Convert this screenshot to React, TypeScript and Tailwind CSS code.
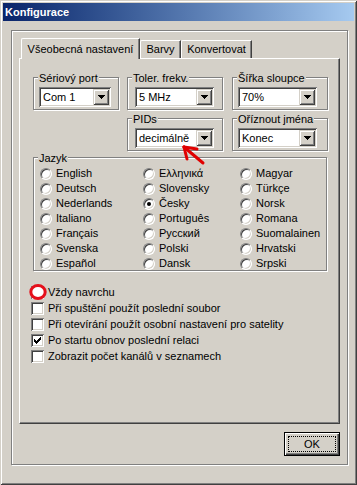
import React from 'react';

const etched = 'border border-[#808080] shadow-[inset_1px_1px_0_#fff,1px_1px_0_#fff]';
const raised =
  'shadow-[inset_1px_1px_0_#d4d0c8,inset_-1px_-1px_0_#404040,inset_2px_2px_0_#fff,inset_-2px_-2px_0_#808080]';
const sunken =
  'shadow-[inset_1px_1px_0_#808080,inset_-1px_-1px_0_#fff,inset_2px_2px_0_#404040,inset_-2px_-2px_0_#d4d0c8]';

function Group({ label, className, children }: { label: string; className: string; children?: React.ReactNode }) {
  return (
    <div className={`relative ${etched} ${className}`}>
      <span className="absolute left-[4px] top-[-6px] bg-[#d4d0c8] px-px leading-[13px]">{label}</span>
      {children}
    </div>
  );
}

function Combo({ value, className }: { value: string; className: string }) {
  return (
    <div className={`flex h-[20px] items-center bg-white p-[2px] ${sunken} ${className}`}>
      <span className="flex-1 pl-[2px] leading-[16px]">{value}</span>
      <span className={`flex h-[16px] w-[16px] items-center justify-center bg-[#d4d0c8] ${raised}`}>
        <svg width="7" height="4" viewBox="0 0 7 4" shapeRendering="crispEdges">
          <rect x="0" y="0" width="7" height="1" fill="#000" />
          <rect x="1" y="1" width="5" height="1" fill="#000" />
          <rect x="2" y="2" width="3" height="1" fill="#000" />
          <rect x="3" y="3" width="1" height="1" fill="#000" />
        </svg>
      </span>
    </div>
  );
}

function Radio({ label, checked }: { label: string; checked?: boolean }) {
  return (
    <div className="flex h-[15px] items-center gap-[4px]">
      <span className="flex h-[12px] w-[12px] items-center justify-center rounded-full border border-b-white border-l-[#808080] border-r-white border-t-[#808080] bg-white shadow-[inset_1px_1px_0_#404040,inset_-1px_-1px_0_#d4d0c8]">
        {checked && <span className="h-[4px] w-[4px] rounded-full bg-black" />}
      </span>
      <span>{label}</span>
    </div>
  );
}

function Check({ label, checked, marked }: { label: string; checked?: boolean; marked?: boolean }) {
  return (
    <div className="flex h-[16px] items-center gap-[4px]">
      <span className={`relative flex h-[13px] w-[13px] items-center justify-center bg-white ${sunken}`}>
        {checked && (
          <svg width="7" height="7" viewBox="0 0 7 7" shapeRendering="crispEdges">
            <path d="M6 0h1v1H6zM5 1h2v1H5zM0 2h1v1H0zM4 2h3v1H4zM0 3h2v1H0zM3 3h3v1H3zM0 4h5v1H0zM1 5h3v1H1zM2 6h1v1H2z" fill="#000" />
          </svg>
        )}
        {marked && (
          <svg
            className="absolute left-1/2 top-1/2 -translate-x-1/2 -translate-y-1/2"
            width="18"
            height="16"
            viewBox="0 0 18 16"
          >
            <ellipse cx="9" cy="8" rx="7.2" ry="6.4" fill="#fff" stroke="#e5101b" strokeWidth="3" />
          </svg>
        )}
      </span>
      <span>{label}</span>
    </div>
  );
}

const col1 = ['English', 'Deutsch', 'Nederlands', 'Italiano', 'Français', 'Svenska', 'Español'];
const col2 = ['Ελληνικά', 'Slovensky', 'Česky', 'Português', 'Русский', 'Polski', 'Dansk'];
const col3 = ['Magyar', 'Türkçe', 'Norsk', 'Romana', 'Suomalainen', 'Hrvatski', 'Srpski'];

export default function App() {
  return (
    <div className="relative flex h-[485px] w-[357px] flex-col bg-[#d4d0c8] p-[3px] font-['Liberation_Sans',Arial,sans-serif] text-[11px] leading-[13px] text-black shadow-[inset_1px_1px_0_#d4d0c8,inset_-1px_-1px_0_#404040,inset_2px_2px_0_#fff,inset_-2px_-2px_0_#808080]">
      <div className="flex h-[18px] items-center bg-linear-to-r from-[#0a246a] to-[#a6caf0] pl-[2px] font-bold text-white">
        Konfigurace
      </div>

      <div className={`ml-[8px] mt-[9px] flex h-[435px] w-[337px] flex-col px-[7px] pt-[7px] ${etched}`}>
        <div className="flex h-[20px] items-end pl-[2px]">
          <div className="relative z-10 -mb-px flex h-[21px] w-[119px] items-center justify-center rounded-tl-[2px] border-l border-r border-t border-l-white border-r-[#404040] border-t-white bg-[#d4d0c8] shadow-[inset_-1px_0_0_#808080]">
            Všeobecná nastavení
          </div>
          <div className="flex h-[18px] w-[41px] items-center justify-center rounded-tl-[2px] border-l border-r border-t border-l-white border-r-[#404040] border-t-white shadow-[inset_-1px_0_0_#808080]">
            Barvy
          </div>
          <div className="flex h-[18px] w-[71px] items-center justify-center rounded-tl-[2px] border-l border-r border-t border-l-white border-r-[#404040] border-t-white shadow-[inset_-1px_0_0_#808080]">
            Konvertovat
          </div>
        </div>

        <div className="flex h-[366px] flex-col border border-b-[#404040] border-l-white border-r-[#404040] border-t-white shadow-[inset_-1px_-1px_0_#808080]">
          <div className="ml-[13px] mt-[18px] flex">
            <Group label="Sériový port" className="h-[33px] w-[86px]">
              <Combo value="Com 1" className="ml-[5px] mt-[9px] w-[72px]" />
            </Group>
            <Group label="Toler. frekv." className="ml-[8px] h-[33px] w-[96px]">
              <Combo value="5 MHz" className="ml-[7px] mt-[9px] w-[79px]" />
            </Group>
            <Group label="Šířka sloupce" className="ml-[9px] h-[33px] w-[96px]">
              <Combo value="70%" className="ml-[5px] mt-[9px] w-[79px]" />
            </Group>
          </div>

          <div className="ml-[107px] mt-[8px] flex">
            <Group label="PIDs" className="h-[33px] w-[96px]">
              <Combo value="decimálně" className="ml-[7px] mt-[9px] w-[79px]" />
            </Group>
            <Group label="Oříznout jména" className="ml-[9px] h-[33px] w-[96px]">
              <Combo value="Konec" className="ml-[5px] mt-[9px] w-[79px]" />
            </Group>
          </div>

          <Group label="Jazyk" className="ml-[13px] mt-[6px] h-[114px] w-[294px]">
            <div className="flex pl-[6px] pt-[8px]">
              <div className="flex w-[103px] flex-col">
                {col1.map((l) => (
                  <Radio key={l} label={l} />
                ))}
              </div>
              <div className="flex w-[97px] flex-col">
                {col2.map((l) => (
                  <Radio key={l} label={l} checked={l === 'Česky'} />
                ))}
              </div>
              <div className="flex flex-col">
                {col3.map((l) => (
                  <Radio key={l} label={l} />
                ))}
              </div>
            </div>
          </Group>

          <div className="ml-[11px] mt-[13px] flex flex-col">
            <Check label="Vždy navrchu" marked />
            <Check label="Při spuštění použít poslední soubor" />
            <Check label="Při otevírání použít osobní nastavení pro satelity" />
            <Check label="Po startu obnov poslední relaci" checked />
            <Check label="Zobrazit počet kanálů v seznamech" />
          </div>
        </div>

        <div className="mt-[8px] flex justify-end">
          <button className="flex h-[24px] w-[56px] items-center justify-center border border-black bg-[#d4d0c8] p-[3px] shadow-[inset_1px_1px_0_#fff,inset_-1px_-1px_0_#404040,inset_-2px_-2px_0_#808080]">
            <span className="flex h-full w-full items-center justify-center border border-dotted border-black">OK</span>
          </button>
        </div>
      </div>

      <svg className="absolute left-[180px] top-[143px]" width="28" height="24" viewBox="0 0 28 24">
        <g stroke="#e00000" strokeWidth="3" strokeLinecap="round" fill="none">
          <path d="M4 4L23 20" />
          <path d="M4 4L17 6" />
          <path d="M4 4L7 16" />
        </g>
      </svg>
    </div>
  );
}
